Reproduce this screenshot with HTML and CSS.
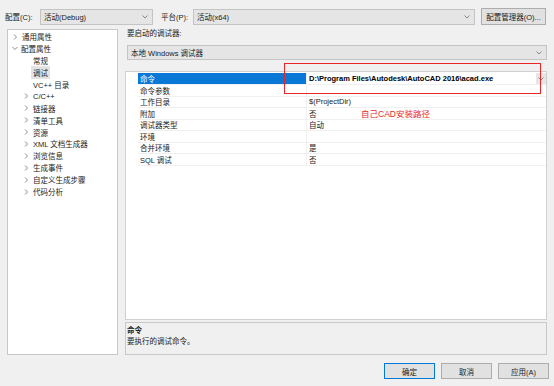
FILE: index.html
```html
<!DOCTYPE html>
<html lang="zh-CN">
<head>
    <meta charset="UTF-8">
    <title>调试属性页</title>
    <link rel="stylesheet" href="styles.css">
</head>
<body>
<div class="dialog">
    <div class="toolbar">
        <span class="lbl lbl-config">配置(C):</span>
        <div class="combo combo-config">
            <span>活动(Debug)</span>
            <svg class="chev" width="6" height="4" viewBox="0 0 6 4"><polyline points="0.5,0.5 3,3 5.5,0.5"/></svg>
        </div>
        <span class="lbl lbl-platform">平台(P):</span>
        <div class="combo combo-platform">
            <span>活动(x64)</span>
            <svg class="chev" width="6" height="4" viewBox="0 0 6 4"><polyline points="0.5,0.5 3,3 5.5,0.5"/></svg>
        </div>
        <button class="btn btn-manager">配置管理器(O)...</button>
    </div>

    <div class="main">
        <ul class="tree">
            <li class="node"><svg class="arrow" width="5" height="6" viewBox="0 0 5 6"><polyline points="1,0.5 3.5,3 1,5.5"/></svg>通用属性</li>
            <li class="node"><svg class="arrow open" width="6" height="5" viewBox="0 0 6 5"><polyline points="0.5,1 3,3.5 5.5,1"/></svg>配置属性</li>
            <li class="node leaf">常规</li>
            <li class="node leaf"><span class="picked">调试</span></li>
            <li class="node leaf">VC++ 目录</li>
            <li class="node sub"><svg class="arrow" width="5" height="6" viewBox="0 0 5 6"><polyline points="1,0.5 3.5,3 1,5.5"/></svg>C/C++</li>
            <li class="node sub"><svg class="arrow" width="5" height="6" viewBox="0 0 5 6"><polyline points="1,0.5 3.5,3 1,5.5"/></svg>链接器</li>
            <li class="node sub"><svg class="arrow" width="5" height="6" viewBox="0 0 5 6"><polyline points="1,0.5 3.5,3 1,5.5"/></svg>清单工具</li>
            <li class="node sub"><svg class="arrow" width="5" height="6" viewBox="0 0 5 6"><polyline points="1,0.5 3.5,3 1,5.5"/></svg>资源</li>
            <li class="node sub"><svg class="arrow" width="5" height="6" viewBox="0 0 5 6"><polyline points="1,0.5 3.5,3 1,5.5"/></svg>XML 文档生成器</li>
            <li class="node sub"><svg class="arrow" width="5" height="6" viewBox="0 0 5 6"><polyline points="1,0.5 3.5,3 1,5.5"/></svg>浏览信息</li>
            <li class="node sub"><svg class="arrow" width="5" height="6" viewBox="0 0 5 6"><polyline points="1,0.5 3.5,3 1,5.5"/></svg>生成事件</li>
            <li class="node sub"><svg class="arrow" width="5" height="6" viewBox="0 0 5 6"><polyline points="1,0.5 3.5,3 1,5.5"/></svg>自定义生成步骤</li>
            <li class="node sub"><svg class="arrow" width="5" height="6" viewBox="0 0 5 6"><polyline points="1,0.5 3.5,3 1,5.5"/></svg>代码分析</li>
        </ul>

        <div class="pane">
            <div class="pane-title">要启动的调试器:</div>
            <div class="combo combo-debugger">
                <span>本地 Windows 调试器</span>
                <svg class="chev" width="6" height="4" viewBox="0 0 6 4"><polyline points="0.5,0.5 3,3 5.5,0.5"/></svg>
            </div>

            <div class="grid">
                <div class="row selected">
                    <div class="gutter"></div>
                    <div class="name">命令</div>
                    <div class="value">
                        <span>D:\Program Files\Autodesk\AutoCAD 2016\acad.exe</span>
                        <span class="drop"><svg width="6" height="4" viewBox="0 0 6 4"><polyline points="0.5,0.5 3,3 5.5,0.5"/></svg></span>
                    </div>
                </div>
                <div class="row"><div class="gutter"></div><div class="name">命令参数</div><div class="value"></div></div>
                <div class="row"><div class="gutter"></div><div class="name">工作目录</div><div class="value">$(ProjectDir)</div></div>
                <div class="row"><div class="gutter"></div><div class="name">附加</div><div class="value">否</div></div>
                <div class="row"><div class="gutter"></div><div class="name">调试器类型</div><div class="value">自动</div></div>
                <div class="row"><div class="gutter"></div><div class="name">环境</div><div class="value"></div></div>
                <div class="row"><div class="gutter"></div><div class="name">合并环境</div><div class="value">是</div></div>
                <div class="row"><div class="gutter"></div><div class="name">SQL 调试</div><div class="value">否</div></div>
            </div>

            <div class="desc">
                <div class="desc-title">命令</div>
                <div>要执行的调试命令。</div>
            </div>
        </div>
    </div>

    <div class="footer">
        <button class="btn btn-ok">确定</button>
        <button class="btn">取消</button>
        <button class="btn">应用(A)</button>
    </div>

    <div class="mark-box"></div>
    <div class="mark-note">自己CAD安装路径</div>
</div>
</body>
</html>
```

FILE: styles.css
```css
* {
    box-sizing: border-box;
}
body {
    margin: 0;
    padding: 0;
    background: #f0f0f0;
    font-family: "Liberation Sans", "Noto Sans CJK SC", sans-serif;
    font-size: 7.5px;
    color: #1a1a1a;
}
.dialog {
    position: relative;
    width: 554px;
    height: 386px;
    overflow: hidden;
}
.toolbar {
    display: flex;
    align-items: center;
    height: 17px;
    margin-top: 8px;
    padding-left: 5px;
}
.lbl-config {
    width: 35px;
}
.lbl-platform {
    width: 32px;
    margin-left: 8px;
}
.combo {
    display: flex;
    align-items: center;
    justify-content: space-between;
    height: 16px;
    padding: 0 4px 0 3px;
    background: #e5e5e5;
    border: 1px solid #c4c4c4;
}
.combo-config {
    width: 113px;
}
.combo-platform {
    width: 282px;
}
.chev polyline,
.drop polyline,
.arrow polyline {
    fill: none;
    stroke: #707070;
    stroke-width: 0.8;
}
.btn {
    height: 16px;
    padding: 0;
    font-family: inherit;
    font-size: 7.5px;
    color: #1a1a1a;
    background: #e1e1e1;
    border: 1px solid #adadad;
}
.btn-manager {
    width: 65px;
    height: 17px;
    margin-left: 6px;
}
.main {
    display: flex;
    margin-top: 4px;
    padding-left: 7px;
}
.tree {
    list-style: none;
    margin: 0;
    padding: 1px 0 0 0;
    width: 111px;
    height: 326px;
    background: #fff;
    border: 1px solid #c8c8c8;
}
.node {
    display: flex;
    align-items: center;
    height: 11.9px;
    padding-left: 14px;
}
.arrow {
    margin-left: -9px;
    margin-right: 4px;
}
.arrow.open {
    margin-left: -10px;
    margin-right: 3px;
}
.leaf {
    padding-left: 25px;
}
.sub {
    padding-left: 25px;
}
.picked {
    margin-left: -2px;
    padding: 1px 2px;
    background: #e3e3e3;
}
.pane {
    width: 422px;
    margin-left: 7px;
}
.pane-title {
    height: 16px;
    padding-left: 2px;
    line-height: 10px;
}
.combo-debugger {
    width: 420px;
    height: 15px;
    margin-left: 2px;
}
.grid {
    height: 249px;
    margin-top: 11px;
    padding-top: 1px;
    background: #fff;
    border: 1px solid #cfcfcf;
}
.row {
    display: grid;
    grid-template-columns: 12px 168px 1fr;
    height: 11.5px;
}
.gutter {
    background: #fff;
}
.name,
.value {
    display: flex;
    align-items: center;
    padding-left: 2px;
    border-bottom: 1px solid #f0f0f0;
}
.value {
    justify-content: space-between;
    border-left: 1px solid #f0f0f0;
}
.selected .name {
    background: #0a78d7;
    color: #fff;
}
.selected .value {
    font-weight: bold;
    color: #000;
    padding-left: 2px;
}
.drop {
    display: flex;
    align-items: center;
    justify-content: center;
    width: 10px;
    height: 100%;
    background: #e6e6e6;
}
.desc {
    height: 33px;
    margin-top: 2px;
    padding: 2px 1px;
    border: 1px solid #c8c8c8;
    line-height: 11px;
}
.desc-title {
    font-weight: bold;
}
.footer {
    display: flex;
    justify-content: flex-end;
    gap: 6px;
    margin-top: 8px;
    padding-right: 5px;
}
.footer .btn {
    width: 51px;
}
.btn-ok {
    border-color: #0078d7;
}
.mark-box {
    position: absolute;
    left: 284px;
    top: 63px;
    width: 257px;
    height: 31px;
    border: 1.5px solid #e8262a;
}
.mark-note {
    position: absolute;
    left: 361px;
    top: 107px;
    font-size: 8.5px;
    color: #e8262a;
}
```
